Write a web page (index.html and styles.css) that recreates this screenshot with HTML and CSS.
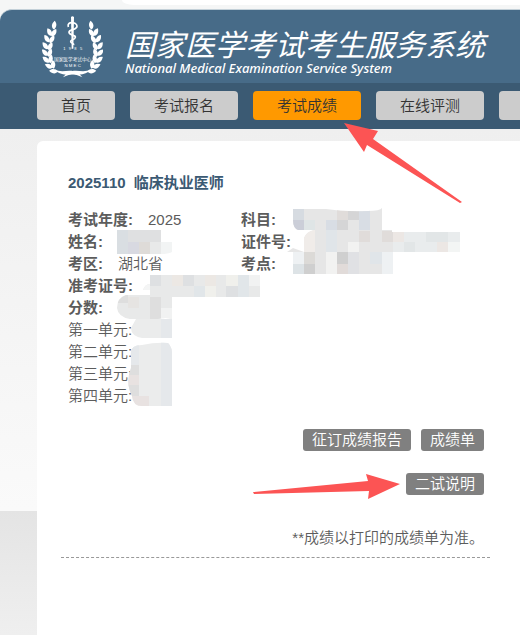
FILE: index.html
```html
<!DOCTYPE html>
<html lang="zh-CN">
<head>
    <meta charset="UTF-8">
    <meta name="viewport" content="width=device-width, initial-scale=1.0">
    <title>国家医学考试考生服务系统</title>
    <link rel="stylesheet" href="styles.css">
</head>
<body>

    <div class="top-strip"><div class="top-tab"></div></div>

    <header class="header">
        <svg class="logo" viewBox="27 25 189 189" aria-hidden="true">
            <defs>
                <path id="leaf" d="M2 2 C-9 0 -12 -11 -6 -23 C4 -18 7 -8 2 2Z"/>
                <g id="branch">
                    <use href="#leaf" transform="translate(68 66) rotate(22)"/>
                    <use href="#leaf" transform="translate(60 86) rotate(-12)"/>
                    <use href="#leaf" transform="translate(63 87) rotate(46)"/>
                    <use href="#leaf" transform="translate(53 105) rotate(-18)"/>
                    <use href="#leaf" transform="translate(57 107) rotate(46)"/>
                    <use href="#leaf" transform="translate(49 126) rotate(-22)"/>
                    <use href="#leaf" transform="translate(53 128) rotate(40)"/>
                    <use href="#leaf" transform="translate(49 146) rotate(-28)"/>
                    <use href="#leaf" transform="translate(53 148) rotate(34)"/>
                    <use href="#leaf" transform="translate(53 166) rotate(-36)"/>
                    <use href="#leaf" transform="translate(57 167) rotate(24)"/>
                    <use href="#leaf" transform="translate(63 183) rotate(-50)"/>
                    <use href="#leaf" transform="translate(67 184) rotate(10)"/>
                    <use href="#leaf" transform="translate(78 195) rotate(-68)"/>
                    <path d="M70 188 C90 199 110 189 128 194 Q144 199 154 212 Q134 202 120 203 Q88 209 70 188Z"/>
                </g>
            </defs>
            <g fill="#fff">
                <use href="#branch"/>
                <use href="#branch" transform="translate(250 0) scale(-1 1)"/>
                <path d="M120 31 Q124 27 129 31 L127 126 H122Z"/>
            </g>
            <path d="M112 61 C106 43 137 45 138 58 C139 71 113 67 114 77 C115 87 135 84 133 92 C131 101 118 98 119 105 C120 111 130 109 128 115" fill="none" stroke="#fff" stroke-width="5"/>
            <g fill="#fff" text-anchor="middle">
                <text x="125" y="131" font-size="12" xml:space="preserve">1   9   8   5</text>
                <text x="125" y="162" font-size="14">国家医学考试中心</text>
                <text x="125" y="180" font-size="13">N M E C</text>
            </g>
        </svg>
        <div class="title">
            <h1>国家医学考试考生服务系统</h1>
            <p>National Medical Examination Service System</p>
        </div>
    </header>

    <nav class="nav">
        <a href="#">首页</a>
        <a href="#">考试报名</a>
        <a href="#" class="active">考试成绩</a>
        <a href="#">在线评测</a>
        <a href="#" class="next" aria-label="更多"></a>
    </nav>

    <main class="main">
        <section class="card">
            <div class="result">
                <h2>2025110 <span>临床执业医师</span></h2>
                <dl class="info">
                    <div><dt>考试年度:</dt><dd>2025</dd></div>
                    <div><dt>科目:</dt><dd></dd></div>
                    <div><dt>姓名:</dt><dd></dd></div>
                    <div><dt>证件号:</dt><dd></dd></div>
                    <div><dt>考区:</dt><dd>湖北省</dd></div>
                    <div><dt>考点:</dt><dd></dd></div>
                    <div class="wide"><dt>准考证号:</dt><dd></dd></div>
                    <div class="wide"><dt>分数:</dt><dd></dd></div>
                </dl>
                <ul class="units">
                    <li>第一单元:</li>
                    <li>第二单元:</li>
                    <li>第三单元:</li>
                    <li>第四单元:</li>
                </ul>
                <div class="actions">
                    <button type="button">征订成绩报告</button>
                    <button type="button">成绩单</button>
                </div>
                <div class="actions">
                    <button type="button">二试说明</button>
                </div>
                <p class="note">**成绩以打印的成绩单为准。</p>
            </div>
        </section>
    </main>

    <!-- masked values and pointer arrows -->
    <svg class="overlay" width="520" height="635" viewBox="0 0 520 635" aria-hidden="true">
        <defs>
            <clipPath id="c1"><path d="M293 209H326Q345 212 368 211Q380 211 382 208V230H392V232H460V252H393V274H293V252H287L293 248L304 252V238Q306 232 314 230H298Q293 228 293 220Z"/></clipPath>
            <clipPath id="c2"><path d="M158 275H260V297H172V319Q166 317 158 319H130Q118 317 117 308Q117 298 126 295H150V290H143Q145 284 150 284V275Z"/></clipPath>
            <clipPath id="c3"><path d="M136 319H172V338H142Q131 336 131 328ZM131 356Q129 345 142 345Q156 342 168 343Q174 348 172 367V406H142Q133 406 132 396Q125 382 131 368Z"/></clipPath>
        </defs>
        <g clip-path="url(#c1)">
            <path fill="#e6e6e6" d="M287 208H382V274H287ZM382 230H393V252H382Z"/>
            <path fill="#d6dbe1" d="M293 208h11v12h-11z"/>
            <path fill="#cbced8" d="M293 220h11v10h-11z"/>
            <path fill="#dfe5e6" d="M304 220h11v10h-11z"/>
            <path fill="#e0dcda" d="M337 208h11v12h-11zM382 231h11v11h-11zM359 231h11v11h-11z"/>
            <path fill="#d5d5d6" d="M337 220h11v10h-11zM348 208h11v12h-11z"/>
            <path fill="#d8dde4" d="M359 208h11v22h-11zM326 220h11v10h-11z"/>
            <path fill="#f0ece9" d="M304 230h11v22h-11z"/>
            <path fill="#e0e5e9" d="M326 230h11v22h-11zM404 242h11v10h-11zM370 252h12v12h-12z"/>
            <path fill="#f2f2f1" d="M348 242h11v10h-11zM326 252h11v22h-11z"/>
            <path fill="#e9eced" d="M393 231h67v21h-67z"/>
            <path fill="#e2e6e7" d="M404 242h11v10h-11zM426 231h22v11h-22z"/>
            <path fill="#ece7e4" d="M393 231h11v11h-11zM437 242h11v10h-11z"/>
            <path fill="#f3f5f4" d="M448 242h12v10h-12z"/>
            <path fill="#eef1f3" d="M287 252h17v12h-17zM382 252h12v22h-12z"/>
            <path fill="#dcdad7" d="M304 252h11v12h-11z"/>
            <path fill="#cfcfcf" d="M304 264h11v10h-11zM337 252h11v12h-11z"/>
            <path fill="#dde3e6" d="M293 264h11v10h-11z"/>
            <path fill="#e1dbd9" d="M337 264h11v10h-11z"/>
            <path fill="#e0e1e4" d="M348 252h11v22h-11z"/>
        </g>
        <g>
            <path fill="#dfe0e1" d="M117 230h44v24h-44z"/>
            <path fill="#d9dee2" d="M117 230h11v24h-11z"/>
            <path fill="#d8d9e1" d="M128 242h11v12h-11z"/>
            <path fill="#dedbd8" d="M139 242h11v12h-11z"/>
            <path fill="#e8e9e9" d="M150 242h11v12h-11z"/>
            <path fill="#f2f4f4" d="M161 242h11v10q-4 2-11 2z"/>
        </g>
        <g clip-path="url(#c2)">
            <path fill="#e8e9e9" d="M117 275h143v44H117z"/>
            <path fill="#f4f5f5" d="M143 283h7v8h-7z"/>
            <path fill="#dee0e2" d="M150 275h11v11h-11zM183 275h11v11h-11zM226 286h12v11h-12z"/>
            <path fill="#ece8e4" d="M172 275h11v11h-11zM205 275h11v11h-11z"/>
            <path fill="#f0f0ec" d="M205 286h11v11h-11zM226 275h12v11h-12z"/>
            <path fill="#e1e6e9" d="M194 286h11v11h-11zM238 275h11v22h-11z"/>
            <path fill="#dedede" d="M150 297h11v22h-11zM117 295h11v8h-11z"/>
            <path fill="#e6e4e2" d="M128 297h11v11h-11z"/>
            <path fill="#f1f2f2" d="M161 308h11v11h-11zM249 275h11v11h-11z"/>
        </g>
        <g clip-path="url(#c3)">
            <path fill="#ebecec" d="M125 319h47v87h-47z"/>
            <path fill="#e5e8eb" d="M161 319h11v87h-11zM131 345h8v20h-8z"/>
            <path fill="#dedede" d="M125 365h14v10h-14zM125 385h14v11h-14z"/>
            <path fill="#e8e2e1" d="M125 375h14v10h-14zM132 396h17v10h-17z"/>
        </g>
        <path fill="#fc5454" d="M344 123L378 131L373 139L462 202L460 203L367 145L364 152Z"/>
        <path fill="#fc5454" d="M253 492L368 481L366 474L400 484L368 499L369 491L254 494Z"/>
    </svg>

</body>
</html>
```
FILE: styles.css
```css
* {
    margin: 0;
    padding: 0;
    box-sizing: border-box;
}

body {
    position: relative;
    min-height: 100vh;
    display: flex;
    flex-direction: column;
    background-color: #f5f6f6;
    color: #5c5c5c;
    font-family: "Liberation Sans", "Noto Sans CJK SC", sans-serif;
    font-size: 15px;
    font-weight: 350;
    line-height: 22px;
    overflow-x: hidden;
}

.top-strip {
    height: 9px;
    padding-left: 122px;
}

.top-tab {
    height: 5px;
    background-color: #fff;
    border-bottom-left-radius: 12px 5px;
}

.header {
    display: flex;
    gap: 22px;
    height: 74px;
    padding: 5px 0 0 40px;
    background-color: #476b88;
    border-top: 1px solid #c3d0d8;
    border-top-left-radius: 12px;
    color: #fff;
}

.logo {
    flex: none;
    width: 63px;
    height: 63px;
}

.title {
    padding-top: 10px;
    white-space: nowrap;
}

.title h1 {
    font-family: "Noto Sans CJK SC", sans-serif;
    font-size: 30px;
    font-weight: 400;
    font-style: italic;
    line-height: 36px;
}

.title p {
    font-family: "Noto Sans", sans-serif;
    font-size: 13px;
    font-weight: 500;
    font-style: italic;
    line-height: 14px;
}

.nav {
    display: flex;
    gap: 15px;
    padding: 8px 0 9px 37px;
    background-color: #3b5a73;
    overflow: hidden;
}

.nav a {
    flex: none;
    padding: 0 24px;
    border-radius: 4px;
    background-color: #ccc;
    color: #333;
    line-height: 29px;
    text-decoration: none;
}

.nav .active {
    background-color: #ff9900;
}

.nav .next {
    width: 108px;
}

.main {
    flex: 1;
    display: flex;
    padding: 12px 0 0 37px;
    background: linear-gradient(#e4e4e4, #efefef) 0 382px / 100% 124px no-repeat,
        linear-gradient(#efefef, #fafafa 380px);
}

.card {
    flex: 1;
    padding: 31px 30px 0 24px;
    background-color: #fff;
    border-top-left-radius: 6px;
}

.result {
    padding: 0 6px 8px 7px;
    border-bottom: 1px dashed #999;
}

h2 {
    margin-bottom: 15px;
    color: #3b5a73;
    font-size: 15px;
    line-height: 22px;
}

h2 span {
    margin-left: 4px;
}

.info {
    display: grid;
    grid-template-columns: 173px 1fr;
}

.info div {
    display: flex;
    gap: 15px;
}

.info .wide {
    grid-column: 1 / -1;
}

.info dt {
    font-weight: bold;
}

.units {
    list-style: none;
}

.actions {
    display: flex;
    justify-content: flex-end;
    gap: 10px;
    margin-top: 22px;
}

.actions button {
    padding: 0 9px;
    border: none;
    border-radius: 3px;
    background-color: #808080;
    color: #fff;
    font: inherit;
    line-height: 22px;
    cursor: pointer;
}

.note {
    margin-top: 32px;
    text-align: right;
}

.overlay {
    position: absolute;
    top: 0;
    left: 0;
    pointer-events: none;
}
```
